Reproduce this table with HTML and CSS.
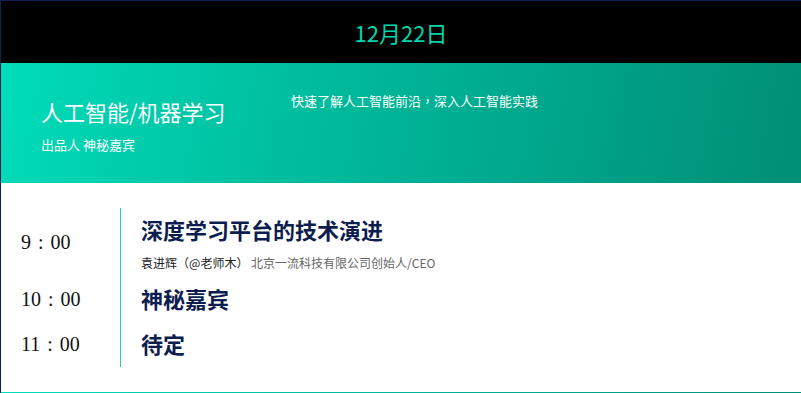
FILE: index.html
```html
<!DOCTYPE html>
<html lang="zh-CN">
<head>
<meta charset="utf-8">
<title>12月22日 人工智能/机器学习</title>
<link rel="stylesheet" href="styles.css">
</head>
<body>
<div class="page">
  <div class="date-bar">12月22日</div>
  <div class="track">
    <div class="track-main">
      <div class="track-title">人工智能/机器学习</div>
      <div class="track-producer">出品人 神秘嘉宾</div>
    </div>
    <div class="track-desc">快速了解人工智能前沿<span class="tc" lang="zh-TW">，</span>深入人工智能实践</div>
  </div>
  <div class="schedule">
    <div class="row">
      <div class="time">9 : 00</div>
      <div class="talk">
        <div class="talk-title">深度学习平台的技术演进</div>
        <div class="speaker"><span class="speaker-name">袁进辉<span class="tc" lang="zh-TW">（</span>@老师木<span class="tc" lang="zh-TW">）</span></span> <span class="speaker-org">北京一流科技有限公司创始人/CEO</span></div>
      </div>
    </div>
    <div class="row">
      <div class="time">10 : 00</div>
      <div class="talk">
        <div class="talk-title">神秘嘉宾</div>
      </div>
    </div>
    <div class="row">
      <div class="time">11 : 00</div>
      <div class="talk">
        <div class="talk-title">待定</div>
      </div>
    </div>
  </div>
  <div class="bottom-line"></div>
</div>
</body>
</html>
```

FILE: styles.css
```css
* { box-sizing: border-box; }
html, body { margin: 0; padding: 0; background: #fff; }
body {
  font-family: "Noto Sans CJK SC", "Noto Sans", sans-serif;
  width: 801px;
  height: 393px;
  overflow: hidden;
}
.tc { font-family: "Noto Sans CJK TC", sans-serif; }
.page {
  border-top: 1px solid #0e2252;
  border-left: 1px solid #0e2252;
  height: 393px;
  display: flex;
  flex-direction: column;
}
.date-bar {
  height: 62px;
  line-height: 62px;
  background: #000;
  color: #00d6ad;
  font-size: 22px;
  text-align: center;
}
.track {
  height: 120px;
  display: flex;
  background: linear-gradient(100deg, #00dcb9 0%, #00b799 45%, #008e76 100%);
  color: #fff;
}
.track-main {
  width: 290px;
  padding: 33px 0 0 40px;
}
.track-title {
  font-size: 22px;
  line-height: 30px;
}
.track-producer {
  font-size: 13px;
  line-height: 20px;
  margin-top: 9px;
}
.track-desc {
  font-size: 13px;
  line-height: 20px;
  padding-top: 28px;
}
.schedule {
  padding: 25px 0 0 0;
  flex: 1;
}
.row {
  display: flex;
}
.time {
  width: 120px;
  padding-left: 20px;
  display: flex;
  align-items: center;
  font-family: "Liberation Serif", serif;
  font-size: 20px;
  word-spacing: 2px;
  white-space: pre;
  color: #111;
  border-right: 1px solid #1fd0a8;
}
.talk {
  padding: 6px 0 8px 20px;
}
.talk-title {
  font-size: 22px;
  line-height: 31px;
  font-weight: bold;
  color: #0d1d4f;
}
.speaker {
  font-size: 12px;
  line-height: 12px;
  margin-top: 12px;
}
.speaker-name { color: #222; }
.speaker-org { color: #666; }
.bottom-line {
  height: 1px;
  background: linear-gradient(90deg, #00dcb9, #008e76);
}
```
